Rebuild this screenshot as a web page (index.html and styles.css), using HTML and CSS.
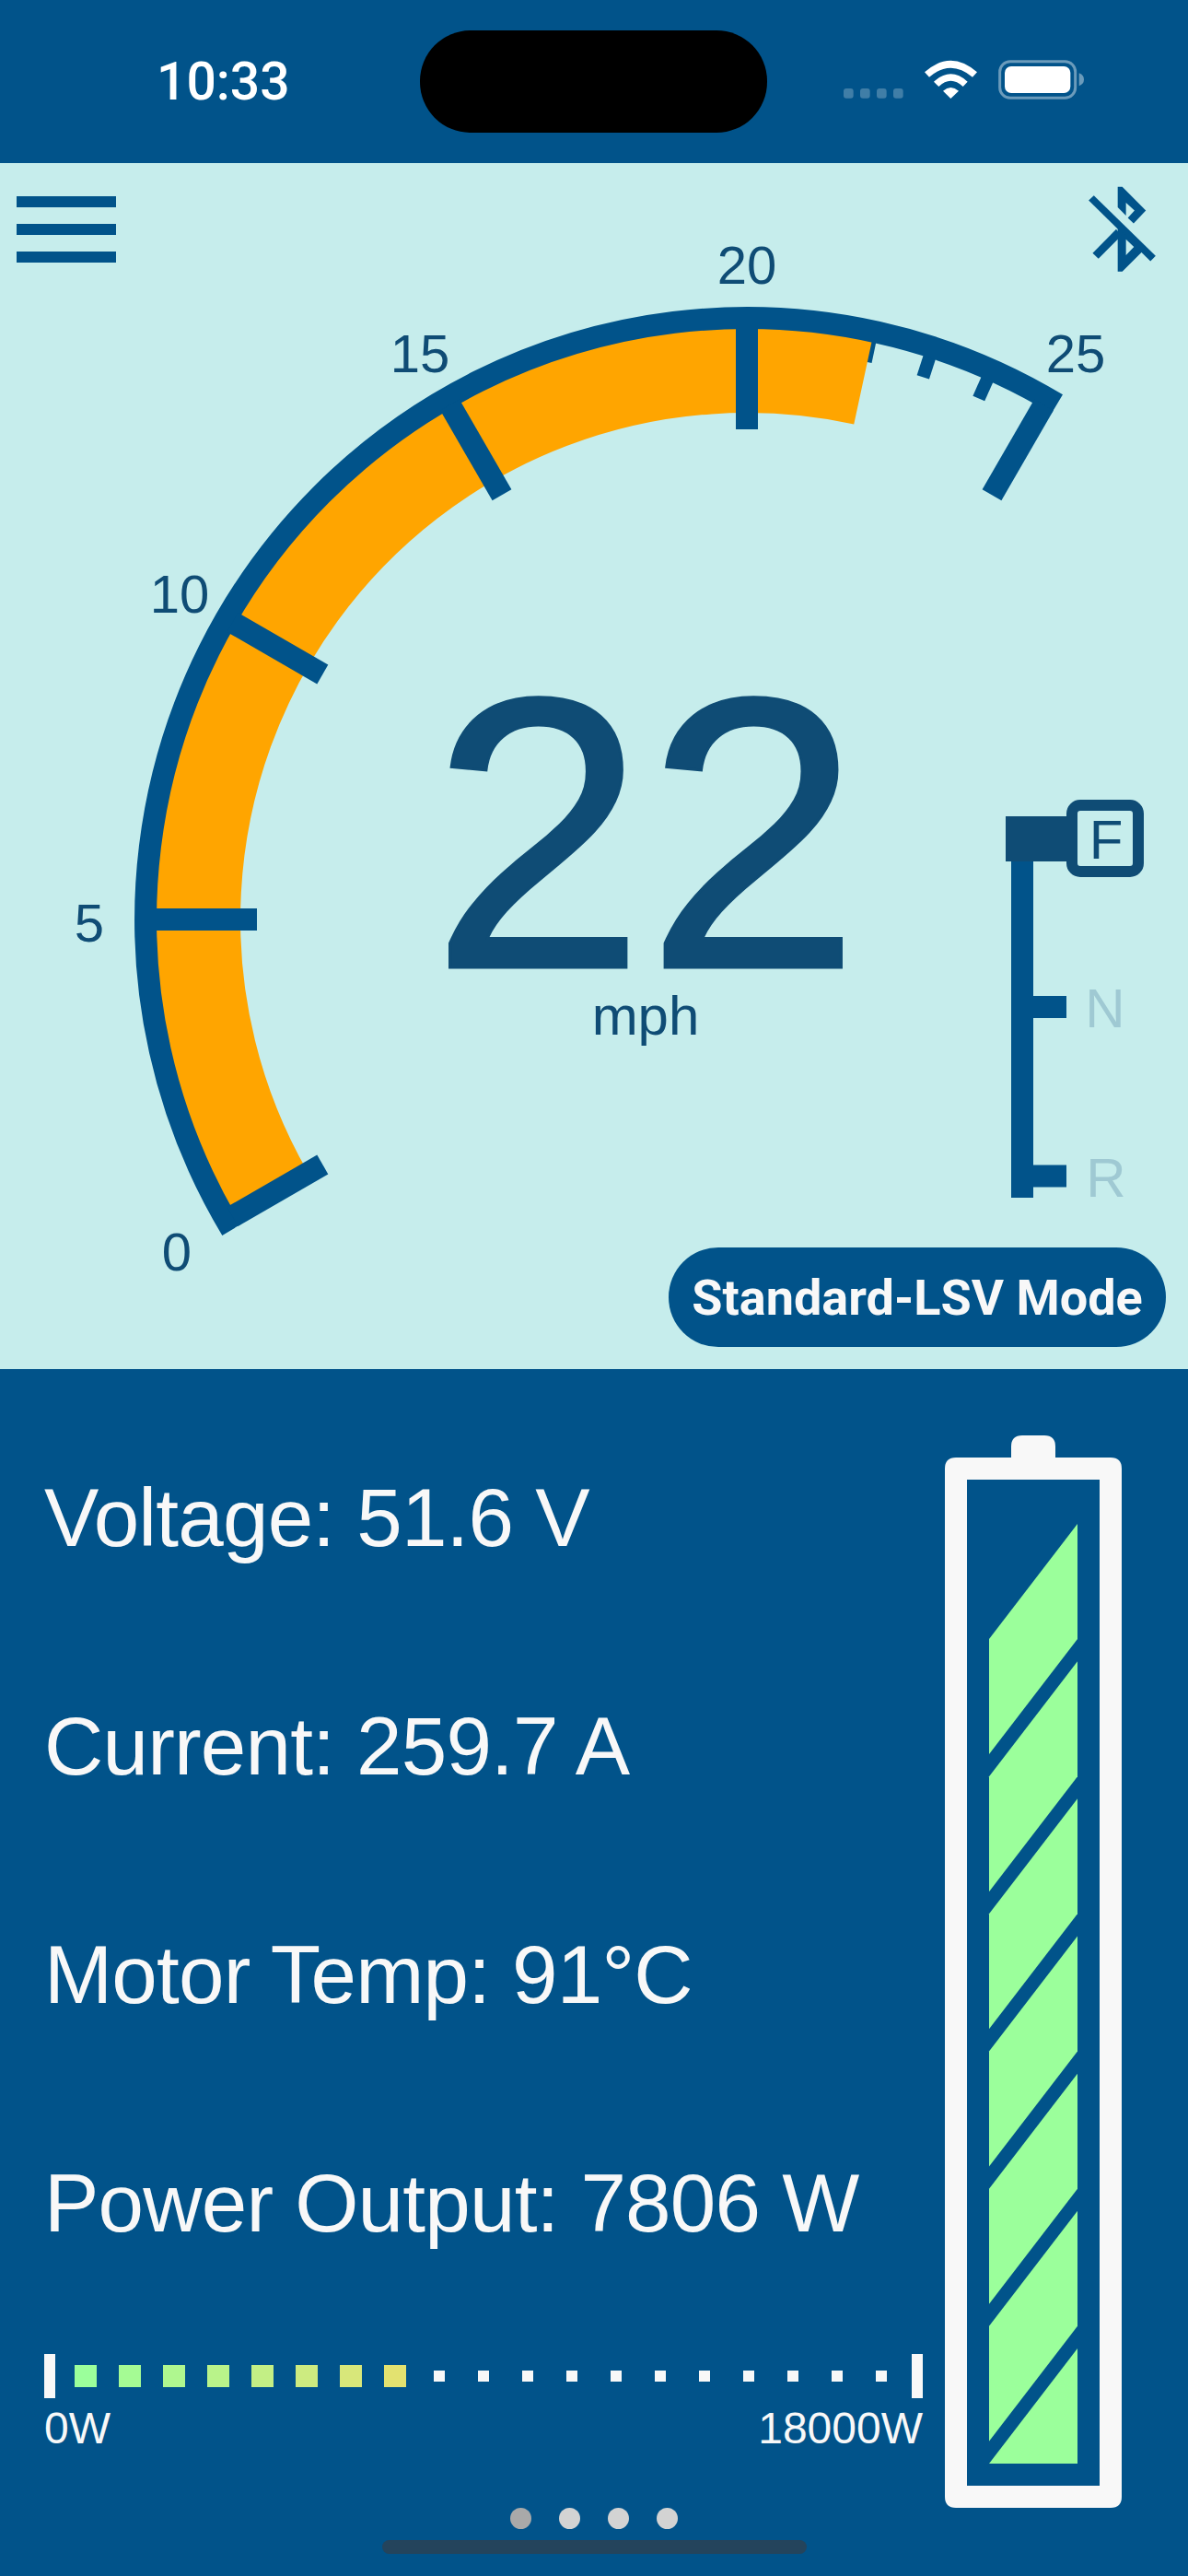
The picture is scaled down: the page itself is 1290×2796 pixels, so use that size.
FILE: index.html
```html
<!DOCTYPE html>
<html lang="en">
<head>
    <meta charset="UTF-8">
    <meta name="viewport" content="width=device-width, initial-scale=1.0">
    <title>Dash</title>
    <link rel="stylesheet" href="styles.css">
</head>
<body>
    <div class="status-bar">
        <span class="clock">10:33</span>
        <div class="island"></div>
        <svg class="status-icons" viewBox="0 0 870 225">
            <g class="signal">
                <rect x="48" y="138" width="32" height="32" rx="9"/>
                <rect x="102" y="138" width="32" height="32" rx="9"/>
                <rect x="156" y="138" width="32" height="32" rx="9"/>
                <rect x="210" y="138" width="32" height="32" rx="9"/>
            </g>
            <g class="wifi">
                <path d="M312 85 Q397 9 483 85 L468 101 Q397 41 327 101 Z"/>
                <path d="M342 116 Q397 66 452 116 L437 132 Q397 94 358 132 Z"/>
                <path d="M372 146 Q397 124 423 146 L397 171 Z"/>
            </g>
            <rect class="batt-outline" x="557" y="50" width="246" height="119" rx="34"/>
            <rect class="batt-level" x="573" y="66" width="214" height="87" rx="21"/>
            <path class="batt-nub" d="M815 88 Q831 94 831 109 Q831 124 815 130 Z"/>
        </svg>
    </div>

    <div class="dash">
        <!-- speedometer, drawn in page coordinates -->
        <svg class="dial" viewBox="0 177 1290 1309">
            <g class="minor-ticks">
                <line x1="878.4" y1="356.5" x2="875.7" y2="382.4"/>
                <line x1="945.1" y1="367.1" x2="939.7" y2="392.6"/>
                <line x1="1010.3" y1="384.6" x2="1002.3" y2="409.3"/>
                <line x1="1073.3" y1="408.8" x2="1062.8" y2="432.5"/>
            </g>
            <path class="dial-fill" d="M291.4 1298 A600 600 0 0 1 937.8 411.6"/>
            <path class="dial-rim" d="M251.6 1334.8 A653 653 0 0 1 1147.8 438.6"/>
            <g class="major-ticks">
                <line x1="252.4" y1="1320.5" x2="350.3" y2="1264"/>
                <line x1="166" y1="998" x2="279" y2="998"/>
                <line x1="252.4" y1="675.5" x2="350.3" y2="732"/>
                <line x1="488.5" y1="439.4" x2="545" y2="537.3"/>
                <line x1="811" y1="353" x2="811" y2="466"/>
                <line x1="1133.5" y1="439.4" x2="1077" y2="537.3"/>
            </g>
            <g class="dial-labels">
                <text x="192" y="1379">0</text>
                <text x="97" y="1022">5</text>
                <text x="195" y="665">10</text>
                <text x="456" y="404">15</text>
                <text x="811" y="308">20</text>
                <text x="1168" y="404">25</text>
            </g>
            <text class="speed" x="701" y="1050">22</text>
            <text class="speed-unit" x="701" y="1123">mph</text>
        </svg>

        <div class="dash-overlay">
            <div class="dash-top">
                <div class="menu-btn"><span></span><span></span><span></span></div>
                <svg class="bt-icon" viewBox="140 60 240 295">
                    <path d="M155 113 L172 97 L374 294 L357 311 Z"/>
                    <path d="M250 68 L265 68 L342 146 L302 188 L283 170 L305 146 L277 120 L277 162 L250 135 Z"/>
                    <path fill-rule="evenodd" d="M250 205 L250 345 L265 345 L335 275 L277 225 Z M277 240 L303 265 L277 292 Z"/>
                    <path d="M245 207 L168 285 L187 303 L262 228 Z"/>
                </svg>
            </div>
            <div class="dash-right">
                <svg class="shifter" viewBox="1092 868 150 432">
                    <rect class="shift-bar" x="1098" y="935" width="24" height="365"/>
                    <rect class="shift-bar" x="1122" y="1081" width="36" height="24"/>
                    <rect class="shift-bar" x="1122" y="1264.5" width="36" height="24"/>
                    <rect class="shift-head" x="1092" y="886" width="70" height="49"/>
                    <rect class="shift-box" x="1164" y="874" width="72" height="72" rx="9"/>
                    <text class="gear gear-on" x="1201" y="932">F</text>
                    <text class="gear" x="1200" y="1115">N</text>
                    <text class="gear" x="1201" y="1299">R</text>
                </svg>
                <div class="mode-pill">Standard-LSV Mode</div>
            </div>
        </div>
    </div>

    <div class="info">
        <div class="info-main">
            <div class="info-left">
                <div class="stat">Voltage: 51.6 V</div>
                <div class="stat">Current: 259.7 A</div>
                <div class="stat">Motor Temp: 91°C</div>
                <div class="stat">Power Output: 7806 W</div>

                <div class="power-bar">
                    <span class="cap"></span>
                    <div class="cells">
                        <span class="cell on l1"></span><span class="cell on l2"></span><span class="cell on l3"></span><span class="cell on l4"></span>
                        <span class="cell on l5"></span><span class="cell on l6"></span><span class="cell on l7"></span><span class="cell on l8"></span>
                        <span class="cell"></span><span class="cell"></span><span class="cell"></span><span class="cell"></span>
                        <span class="cell"></span><span class="cell"></span><span class="cell"></span><span class="cell"></span>
                        <span class="cell"></span><span class="cell"></span><span class="cell"></span>
                    </div>
                    <span class="cap"></span>
                </div>
                <div class="power-labels"><span>0W</span><span>18000W</span></div>
            </div>

            <svg class="battery" viewBox="1026 1558 192 1164">
                <path class="batt-shell" fill-rule="evenodd" d="M1110 1558 H1134 Q1146 1558 1146 1570 V1582 H1206 Q1218 1582 1218 1594 V2710 Q1218 2722 1206 2722 H1038 Q1026 2722 1026 2710 V1594 Q1026 1582 1038 1582 H1098 V1570 Q1098 1558 1110 1558 Z M1050 1606 V2698 H1194 V1606 Z"/>
                <g class="batt-cells">
                    <polygon points="1170,1654 1170,1779 1074,1904 1074,1779"/>
                    <polygon points="1170,1803.2 1170,1928.2 1074,2053.2 1074,1928.2"/>
                    <polygon points="1170,1952.3 1170,2077.3 1074,2202.3 1074,2077.3"/>
                    <polygon points="1170,2101.5 1170,2226.5 1074,2351.5 1074,2226.5"/>
                    <polygon points="1170,2250.7 1170,2375.7 1074,2500.7 1074,2375.7"/>
                    <polygon points="1170,2399.8 1170,2524.8 1074,2649.8 1074,2524.8"/>
                    <polygon points="1170,2549 1170,2674 1074,2674"/>
                </g>
            </svg>
        </div>

        <div class="pager">
            <span class="dot active"></span><span class="dot"></span><span class="dot"></span><span class="dot"></span>
        </div>
        <div class="home-bar"></div>
    </div>
</body>
</html>
```

FILE: styles.css
```css
body {
    margin: 0;
    padding: 0;
    background-color: #01538a;
    font-family: 'Liberation Sans', Arial, sans-serif;
}

/* status bar */
.status-bar {
    height: 177px;
    box-sizing: border-box;
    padding: 33px 0 0 170px;
    display: flex;
    align-items: flex-start;
}

.clock {
    width: 286px;
    margin-top: 24px;
    font-family: Roboto, sans-serif;
    font-size: 57px;
    font-weight: 500;
    line-height: 64px;
    color: #fff;
}

.island {
    width: 377px;
    height: 111px;
    border-radius: 55px;
    background-color: #000;
}

.status-icons {
    width: 290px;
    height: 75px;
    margin: 17px 0 0 67px;
}

.signal rect { fill: rgba(255, 255, 255, 0.25); }
.wifi path { fill: #fff; }
.batt-outline { fill: none; stroke: rgba(255, 255, 255, 0.42); stroke-width: 9; }
.batt-level { fill: #fff; }
.batt-nub { fill: rgba(255, 255, 255, 0.42); }

/* light dashboard */
.dash {
    height: 1309px;
    background-color: #c6edec;
    display: grid;
}

.dial,
.dash-overlay {
    grid-area: 1 / 1;
}

.dial {
    display: block;
    width: 1290px;
    height: 1309px;
}

.minor-ticks line { stroke: #01538a; stroke-width: 14; }
.major-ticks line { stroke: #01538a; stroke-width: 24; }
.dial-fill { fill: none; stroke: #ffa500; stroke-width: 100; }
.dial-rim { fill: none; stroke: #01538a; stroke-width: 24; }

.dial-labels text {
    font-size: 58px;
    fill: #0f4c75;
    text-anchor: middle;
}

.speed {
    font-size: 420px;
    fill: #0f4c75;
    text-anchor: middle;
    stroke: #0f4c75;
    stroke-width: 3;
}

.speed-unit {
    font-size: 60px;
    fill: #0f4c75;
    text-anchor: middle;
}

.dash-overlay {
    display: flex;
    flex-direction: column;
    justify-content: space-between;
}

.dash-top {
    display: flex;
    justify-content: space-between;
    align-items: flex-start;
}

.menu-btn {
    margin: 36px 0 0 18px;
    display: flex;
    flex-direction: column;
    gap: 18px;
}

.menu-btn span {
    display: block;
    width: 108px;
    height: 12px;
    background-color: #01538a;
}

.bt-icon {
    width: 80px;
    height: 98px;
    margin: 23px 33px 0 0;
}

.bt-icon path { fill: #01538a; }

.dash-right {
    display: flex;
    flex-direction: column;
    align-items: flex-end;
    padding: 0 24px 24px 0;
    gap: 54px;
}

.shifter {
    display: block;
    width: 150px;
    height: 432px;
    margin-right: 24px;
    overflow: visible;
}

.shift-bar { fill: #01538a; }
.shift-head { fill: #0f4c75; }
.shift-box { fill: #c6edec; stroke: #0f4c75; stroke-width: 12; }

.gear {
    font-size: 60px;
    fill: #9fc9d3;
    text-anchor: middle;
}

.gear-on { fill: #0f4c75; }

.mode-pill {
    width: 540px;
    height: 108px;
    border-radius: 54px;
    background-color: #01538a;
    color: #f8f8f8;
    font-family: Roboto, sans-serif;
    font-size: 54px;
    font-weight: 700;
    display: flex;
    align-items: center;
    justify-content: center;
}

/* lower panel */
.info {
    height: 1310px;
    display: flex;
    flex-direction: column;
}

.info-main {
    display: flex;
    justify-content: space-between;
    padding: 0 72px 0 48px;
}

.info-left {
    width: 954px;
    padding-top: 37px;
}

.stat {
    font-size: 89px;
    letter-spacing: -0.8px;
    line-height: 248px;
    color: #f8f8f8;
    white-space: nowrap;
}

.power-bar {
    margin-top: 40px;
    display: flex;
    align-items: center;
    height: 48px;
}

.cap {
    width: 12px;
    height: 48px;
    background-color: #f8f8f8;
}

.cells {
    flex: 1;
    padding: 0 9px;
    display: grid;
    grid-template-columns: repeat(19, 48px);
    justify-items: center;
    align-items: center;
}

.cell {
    width: 12px;
    height: 12px;
    background-color: #f8f8f8;
}

.cell.on {
    width: 24px;
    height: 24px;
}

.l1 { background-color: #9bff9b; }
.l2 { background-color: #a5fb94; }
.l3 { background-color: #aff78f; }
.l4 { background-color: #b9f38a; }
.l5 { background-color: #c3ef85; }
.l6 { background-color: #cdeb80; }
.l7 { background-color: #d8e77a; }
.l8 { background-color: #e3e270; }

.power-labels {
    margin-top: 5px;
    display: flex;
    justify-content: space-between;
    font-size: 48px;
    line-height: 56px;
    color: #f8f8f8;
}

.battery {
    display: block;
    width: 192px;
    height: 1164px;
    margin-top: 72px;
}

.batt-shell { fill: #f8f8f8; }
.batt-cells polygon { fill: #9bff9b; }

.pager {
    display: flex;
    justify-content: center;
    gap: 30px;
}

.dot {
    width: 23px;
    height: 23px;
    border-radius: 50%;
    background-color: #d3d3d3;
}

.dot.active { background-color: #a9a9a9; }

.home-bar {
    width: 461px;
    height: 15px;
    margin: 12px auto 0;
    border-radius: 8px;
    background-color: #24445c;
}
```
